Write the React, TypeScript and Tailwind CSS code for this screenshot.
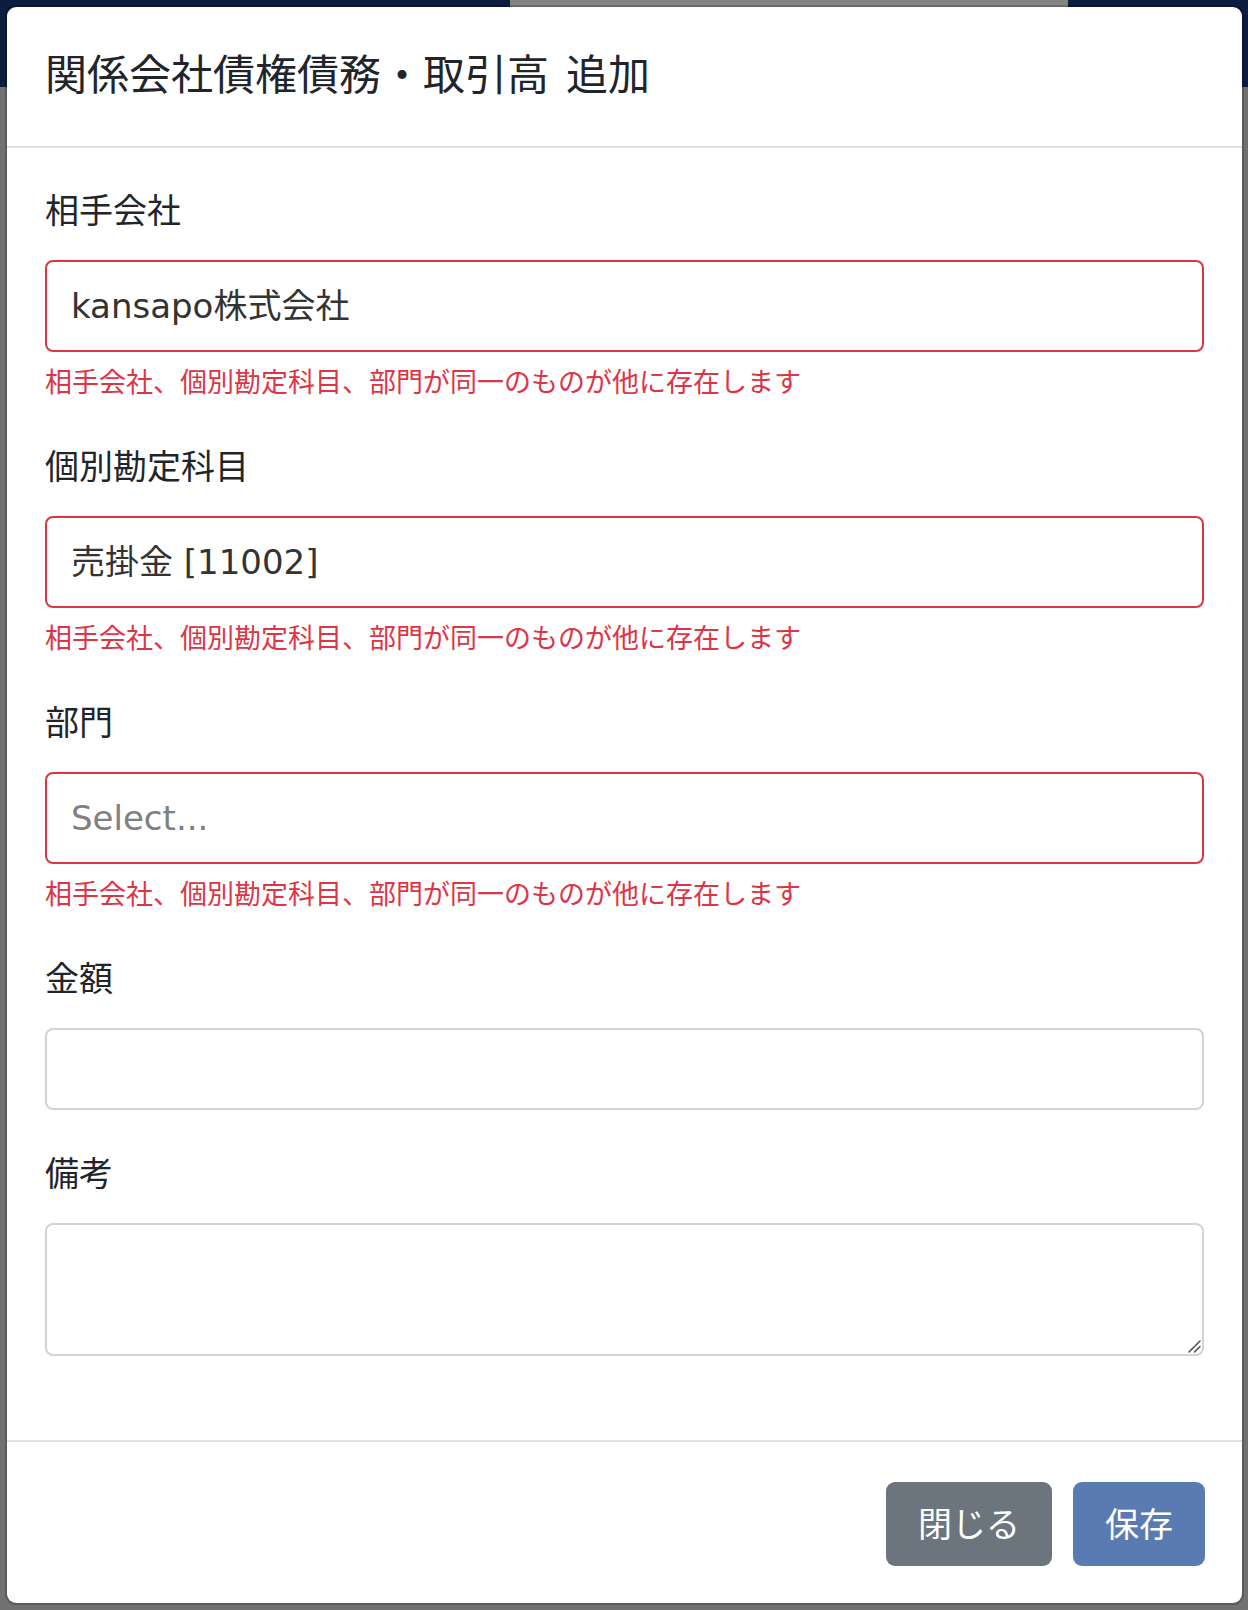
const font = "font-['Noto_Sans','Noto_Sans_CJK_JP',sans-serif]";
const valueFont = "font-['DejaVu_Sans','Noto_Sans_CJK_JP',sans-serif]";

const ERROR = "相手会社、個別勘定科目、部門が同一のものが他に存在します";

function SelectField({ label, value, placeholder }: { label: string; value?: string; placeholder?: string }) {
  return (
    <div className="mb-[39px]">
      <div className="mb-[24px] text-[34px] leading-[51px] text-[#212529]">{label}</div>
      <div className={`flex h-[92px] items-center rounded-[8px] border-2 border-[#dc3545] pl-[24px] text-[34px] ${valueFont}`}>
        {value ? (
          <span className="text-[#333333]">{value}</span>
        ) : (
          <span className="text-[#808080]">{placeholder}</span>
        )}
      </div>
      <div className="mt-[9px] text-[27px] leading-[41px] text-[#dc3545]">{ERROR}</div>
    </div>
  );
}

export default function App() {
  return (
    <div className={`relative h-[1610px] w-[1248px] overflow-hidden bg-[#717171] ${font}`}>
      {/* dimmed page behind the modal */}
      <div className="flex h-[87px]">
        <div className="w-[510px] bg-[#0c1d3f]" />
        <div className="flex-1 bg-[#858585]" />
        <div className="w-[180px] bg-[#0c1d3f]" />
      </div>

      {/* modal */}
      <div className="absolute left-[5px] top-[5px] flex h-[1600px] w-[1239px] flex-col rounded-[11px] border-2 border-black/20 bg-white bg-clip-padding">
        <div className="h-[141px] border-b-2 border-[#dee2e6] px-[38px] pt-[35px]">
          <h5 className="text-[42px] leading-[63px] text-[#212529] [word-spacing:6px]">関係会社債権債務・取引高 追加</h5>
        </div>

        <div className="flex-1 px-[38px] pt-[37px]">
          <SelectField label="相手会社" value="kansapo株式会社" />
          <SelectField label="個別勘定科目" value="売掛金 [11002]" />
          <SelectField label="部門" placeholder="Select..." />

          <div className="mb-[38px]">
            <div className="mb-[24px] text-[34px] leading-[51px] text-[#212529]">金額</div>
            <input
              type="text"
              className="block h-[82px] w-full rounded-[8px] border-2 border-[#ced4da] px-[24px] text-[34px] text-[#495057] outline-none"
            />
          </div>

          <div>
            <div className="mb-[24px] text-[34px] leading-[51px] text-[#212529]">備考</div>
            <div className="relative">
              <textarea className="block h-[133px] w-full resize-none rounded-[8px] border-2 border-[#ced4da] px-[24px] text-[34px] text-[#495057] outline-none" />
              <svg className="absolute bottom-[3px] right-[3px]" width="14" height="14" viewBox="0 0 14 14">
                <path d="M2 13 L13 2 M7.5 13 L13 7.5" stroke="#555" strokeWidth="1.6" strokeLinecap="round" />
              </svg>
            </div>
          </div>
        </div>

        <div className="flex h-[163px] justify-end gap-[21px] border-t-2 border-[#dee2e6] pr-[37px] pt-[40px]">
          <button className="h-[84px] rounded-[9px] bg-[#6c757d] px-[32px] text-[34px] text-white">閉じる</button>
          <button className="h-[84px] rounded-[9px] bg-[#5a7bb1] px-[32px] text-[34px] text-white">保存</button>
        </div>
      </div>
    </div>
  );
}
